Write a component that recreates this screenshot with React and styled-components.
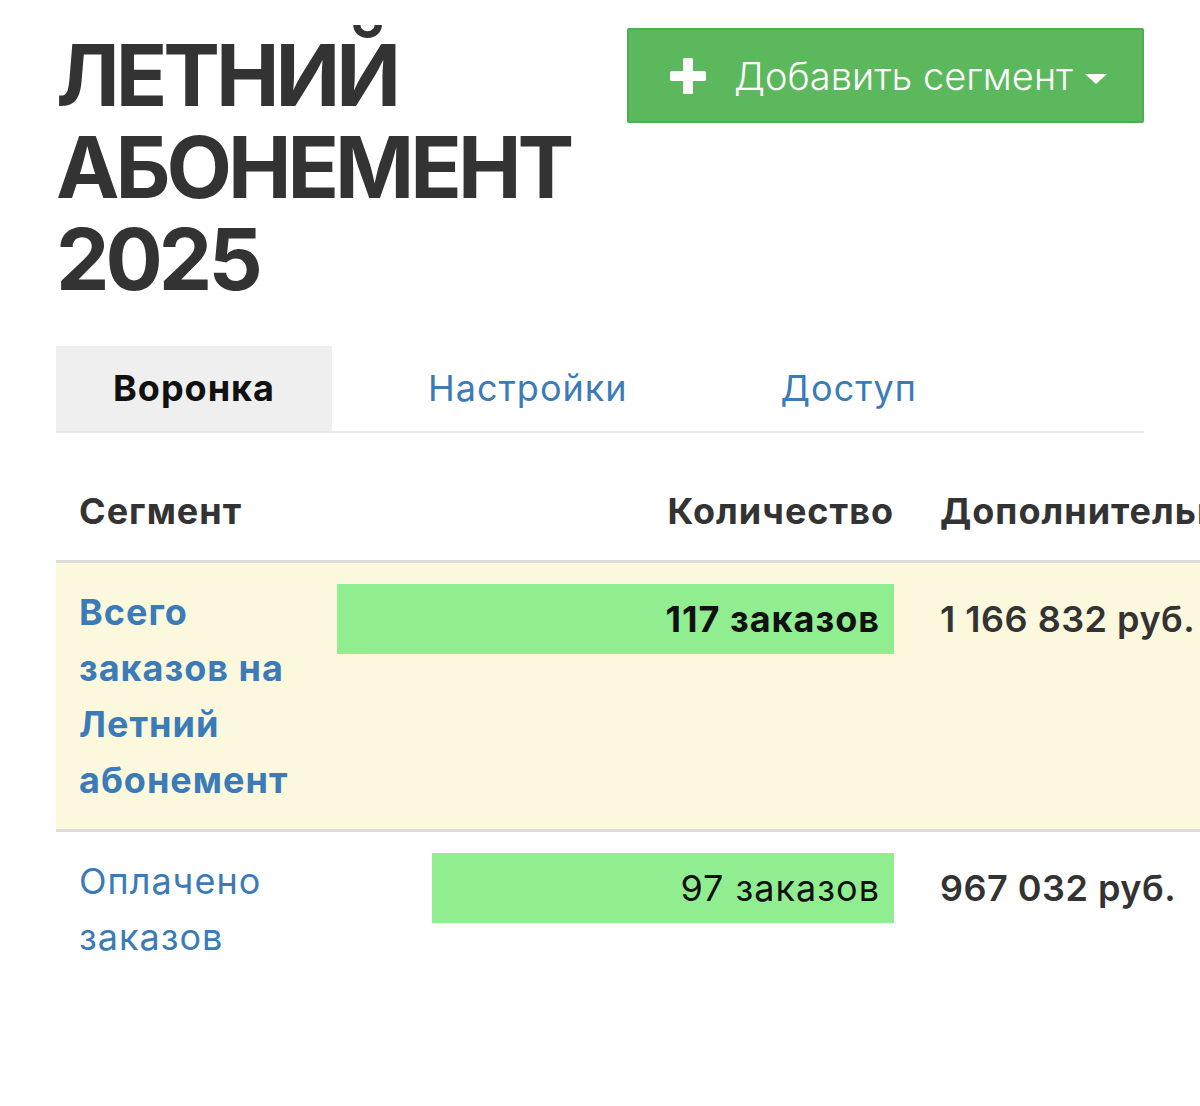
import React from 'react';
import styled, { createGlobalStyle } from 'styled-components';

const GlobalStyle = createGlobalStyle`
  html, body {
    margin: 0;
    padding: 0;
    background: #ffffff;
    overflow-x: hidden;
  }
  body {
    font-family: 'Inter', 'Noto Sans', sans-serif;
    color: #333333;
  }
`;

const Page = styled.div`
  padding: 28px 0 60px 56px;
`;

const Container = styled.div`
  width: 1088px;
`;

const Header = styled.div`
  display: flex;
  justify-content: space-between;
  align-items: flex-start;
`;

const Title = styled.h1`
  margin: 2px 0 0;
  max-width: 560px;
  font-size: 85px;
  line-height: 92px;
  font-weight: 700;
  color: #333333;
  letter-spacing: -4px;
`;

const AddButton = styled.button`
  display: flex;
  align-items: center;
  justify-content: center;
  gap: 28px;
  width: 517px;
  height: 95px;
  background: #5cb85c;
  border: 2px solid #4cae4c;
  border-radius: 2px;
  color: #ffffff;
  font-family: inherit;
  font-size: 38px;
  font-weight: 300;
  cursor: pointer;
  padding: 0 0 0 6px;
`;

const Caret = styled.span`
  display: inline-block;
  width: 0;
  height: 0;
  margin-left: 12px;
  border-left: 11px solid transparent;
  border-right: 11px solid transparent;
  border-top: 10px solid #ffffff;
  vertical-align: middle;
`;

const Tabs = styled.ul`
  display: flex;
  gap: 39px;
  list-style: none;
  margin: 40px 0 0;
  padding: 0;
  border-bottom: 2px solid #e9e9e9;
`;

const Tab = styled.li`
  padding: 0 57px;
  height: 85px;
  line-height: 85px;
  font-size: 36px;
  letter-spacing: 1px;
  font-weight: ${(p) => (p.active ? 700 : 400)};
  color: ${(p) => (p.active ? '#111111' : '#3a7bb8')};
  background: ${(p) => (p.active ? '#efefef' : 'transparent')};
`;

const Table = styled.table`
  margin-top: 29px;
  width: 1400px;
  border-collapse: collapse;
  table-layout: fixed;
`;

const HeadCell = styled.th`
  padding: 21px 23px;
  line-height: 56px;
  font-size: 36px;
  letter-spacing: 1px;
  font-weight: 700;
  color: #333333;
  text-align: ${(p) => p.align || 'left'};
  white-space: nowrap;
  border-bottom: 3px solid #dddddd;
`;

const Row = styled.tr`
  background: ${(p) => (p.highlight ? '#fcf8dd' : 'transparent')};
  border-bottom: 3px solid ${(p) => (p.highlight ? '#dddddd' : 'transparent')};
`;

const Cell = styled.td`
  padding: 21px 23px;
  vertical-align: top;
`;

const SegmentLink = styled.a`
  display: block;
  font-size: 36px;
  letter-spacing: 1px;
  line-height: 56px;
  font-weight: ${(p) => (p.bold ? 700 : 400)};
  color: #3a7bb8;
  text-decoration: none;
`;

const BarTrack = styled.div`
  display: flex;
  justify-content: flex-end;
`;

const Bar = styled.div`
  height: 70px;
  background: #90ee90;
  display: flex;
  align-items: center;
  justify-content: flex-end;
  padding-right: 14px;
  box-sizing: border-box;
  font-size: 36px;
  letter-spacing: 1px;
  font-weight: ${(p) => (p.bold ? 700 : 400)};
  color: #111111;
  white-space: nowrap;
`;

const Amount = styled.div`
  line-height: 70px;
  font-size: 36px;
  letter-spacing: 0.5px;
  font-weight: 600;
  color: #333333;
  white-space: nowrap;
`;

const rows = [
  { name: 'Всего заказов на Летний абонемент', count: 117, amount: '1 166 832 руб.', total: true },
  { name: 'Оплачено заказов', count: 97, amount: '967 032 руб.', total: false },
];

const PlusIcon = () => (
  <svg width="36" height="36" viewBox="0 0 36 36" aria-hidden="true">
    <rect x="13" y="0" width="10" height="36" rx="1.5" fill="#fff" />
    <rect x="0" y="13" width="36" height="10" rx="1.5" fill="#fff" />
  </svg>
);

const App = () => {
  const max = Math.max(...rows.map((r) => r.count));
  const fullWidth = 557;

  return (
    <Page>
      <GlobalStyle />
      <Container>
        <Header>
          <Title>ЛЕТНИЙ АБОНЕМЕНТ 2025</Title>
          <AddButton>
            <PlusIcon />
            <span>
              Добавить сегмент
              <Caret />
            </span>
          </AddButton>
        </Header>

        <Tabs>
          <Tab active>Воронка</Tab>
          <Tab>Настройки</Tab>
          <Tab>Доступ</Tab>
        </Tabs>
      </Container>

      <Table>
        <colgroup>
          <col style={{ width: 258 }} />
          <col style={{ width: 603 }} />
          <col />
        </colgroup>
        <thead>
          <tr>
            <HeadCell>Сегмент</HeadCell>
            <HeadCell align="right">Количество</HeadCell>
            <HeadCell>Дополнительно</HeadCell>
          </tr>
        </thead>
        <tbody>
          {rows.map((r) => (
            <Row key={r.name} highlight={r.total}>
              <Cell>
                <SegmentLink href="#" bold={r.total}>{r.name}</SegmentLink>
              </Cell>
              <Cell>
                <BarTrack>
                  <Bar bold={r.total} style={{ width: Math.round((r.count / max) * fullWidth) }}>
                    {r.count} заказов
                  </Bar>
                </BarTrack>
              </Cell>
              <Cell>
                <Amount>{r.amount}</Amount>
              </Cell>
            </Row>
          ))}
        </tbody>
      </Table>
    </Page>
  );
};

export default App;
